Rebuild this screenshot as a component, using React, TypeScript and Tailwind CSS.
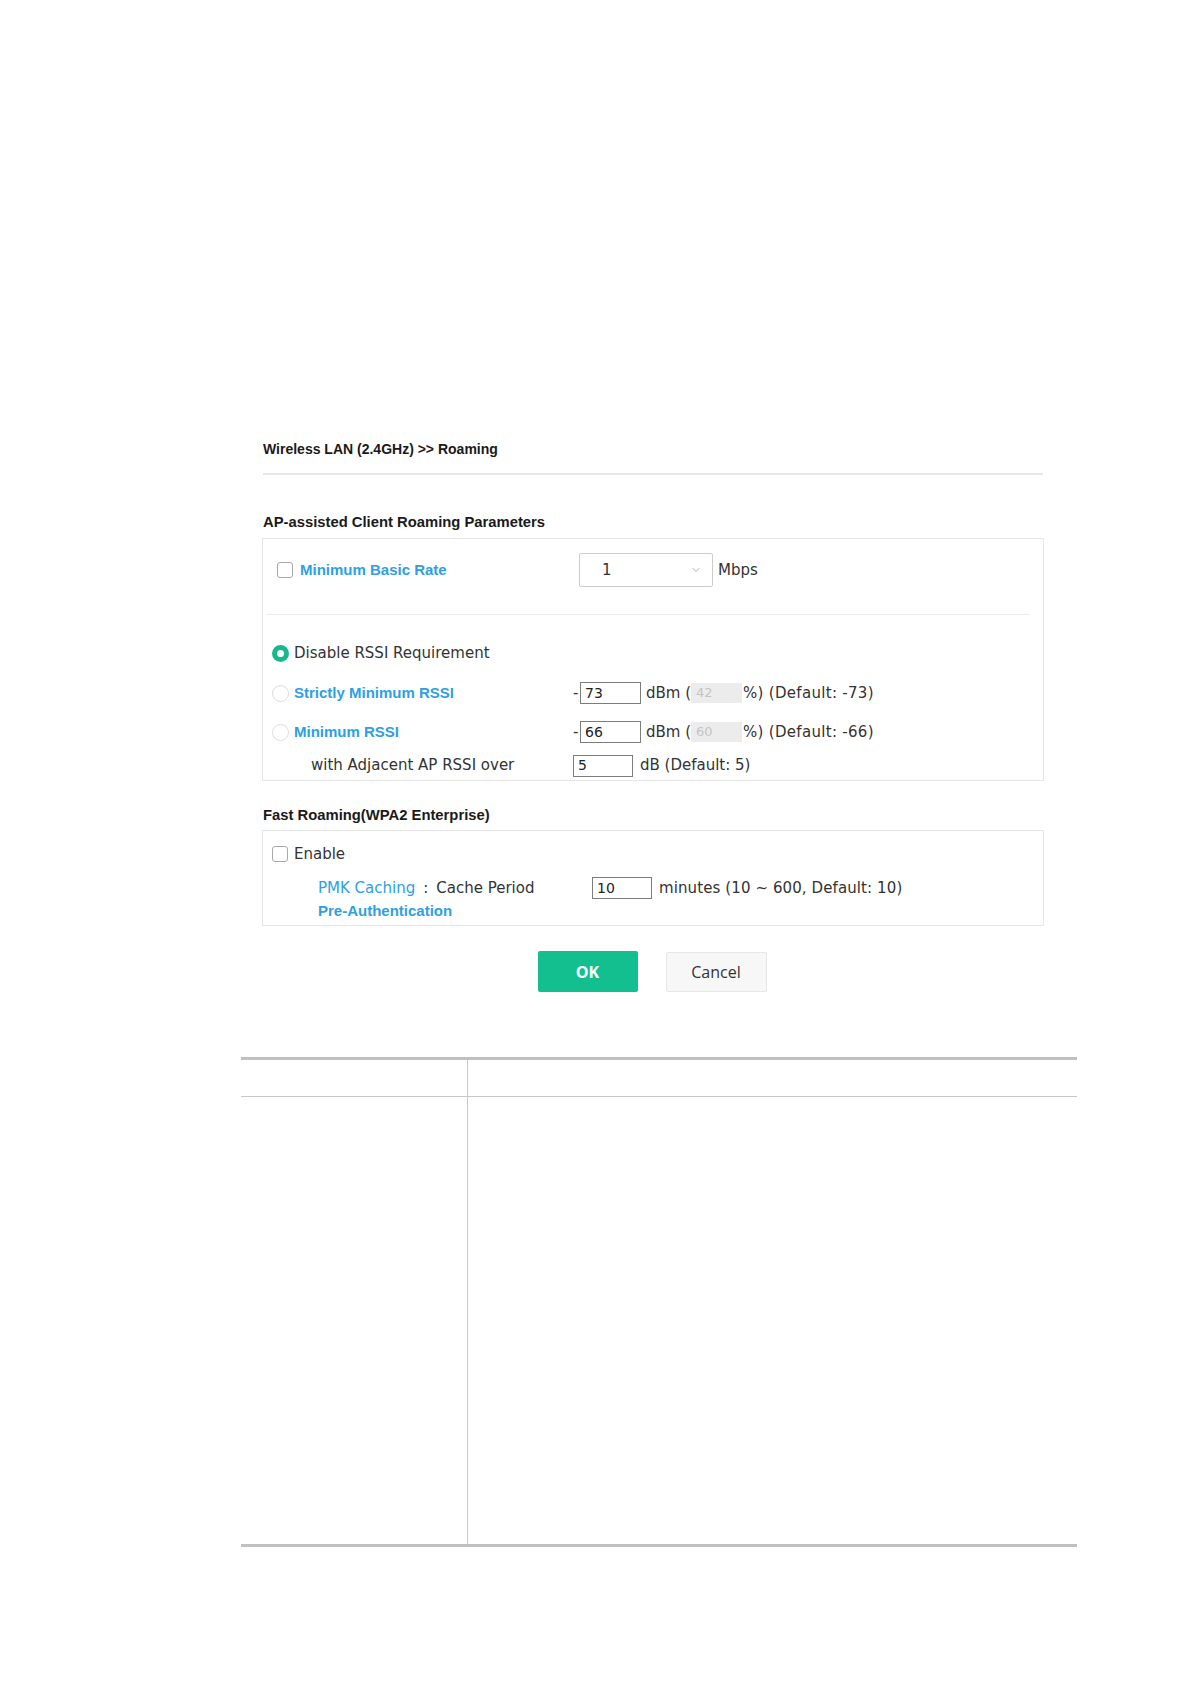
import { ChevronDown } from "lucide-react";

const body = "font-['DejaVu_Sans',sans-serif] text-[15px] text-[#333]";
const link = "font-['Liberation_Sans',Arial,sans-serif] font-bold text-[15px] text-[#2f9fe3]";

function Checkbox() {
  return <span className="block h-[16px] w-[16px] shrink-0 rounded-[3px] border border-[#a8a8a8] bg-white" />;
}

function Radio({ checked = false }: { checked?: boolean }) {
  if (checked) {
    return (
      <span className="flex h-[17px] w-[17px] shrink-0 items-center justify-center rounded-full bg-[#17b98c]">
        <span className="block h-[7px] w-[7px] rounded-full bg-white" />
      </span>
    );
  }
  return <span className="block h-[17px] w-[17px] shrink-0 rounded-full border border-[#dcdcdc] bg-white" />;
}

function TextBox({ value, width }: { value: string; width: string }) {
  return (
    <span
      className={`flex h-[22px] ${width} items-center border border-[#7d7d7d] bg-white pl-[4px] font-['DejaVu_Sans',sans-serif] text-[14px] text-[#222]`}
    >
      {value}
    </span>
  );
}

function PercentBox({ value }: { value: string }) {
  return (
    <span className="flex h-[20px] w-[51px] items-center bg-[#ececec] pl-[5px] font-['DejaVu_Sans',sans-serif] text-[13px] text-[#c4c4c4]">
      {value}
    </span>
  );
}

function RssiRow({ label, value, percent, def }: { label: string; value: string; percent: string; def: string }) {
  return (
    <div className={`flex h-[22px] items-center ${body}`}>
      <div className="flex w-[310px] items-center gap-[5px] pl-[9px]">
        <Radio />
        <span className={link}>{label}</span>
      </div>
      <span className="w-[7px]">-</span>
      <TextBox value={value} width="w-[61px]" />
      <span className="ml-[5px]">dBm (</span>
      <PercentBox value={percent} />
      <span className="ml-[1px] tracking-[0.3px]">%) (Default: {def})</span>
    </div>
  );
}

export default function App() {
  return (
    <div className="min-h-[1684px] w-[1190px] bg-white">
      <div className="ml-[262px] w-[782px] pt-[439px]">
        {/* Title */}
        <h1 className="h-[20px] pl-px font-['Liberation_Sans',Arial,sans-serif] text-[14px] leading-[20px] font-bold text-[#1a1a1a]">
          Wireless LAN (2.4GHz) &gt;&gt; Roaming
        </h1>
        <div className="ml-px mt-[14px] h-[2px] w-[780px] bg-[#e8e8e8]" />

        {/* AP-assisted */}
        <h2 className="mt-[37px] h-[20px] pl-px font-['Liberation_Sans',Arial,sans-serif] text-[14.8px] leading-[20px] font-bold text-[#1a1a1a]">
          AP-assisted Client Roaming Parameters
        </h2>
        <div className="mt-[6px] w-[782px] border border-[#e6e6e6] pb-[4px]">
          <div className="flex items-center pl-[14px] pt-[14px]">
            <div className={`flex w-[302px] items-center gap-[7px] ${body}`}>
              <Checkbox />
              <span className={link}>Minimum Basic Rate</span>
            </div>
            <div className={`flex h-[34px] w-[134px] items-center justify-between rounded-[2px] border border-[#cccccc] pl-[22px] pr-[10px] ${body}`}>
              <span>1</span>
              <ChevronDown className="h-[12px] w-[12px] text-[#9a9a9a]" strokeWidth={1.5} />
            </div>
            <span className={`ml-[5px] ${body}`}>Mbps</span>
          </div>
          <div className="ml-[4px] mr-[14px] mt-[27px] h-px bg-[#ececec]" />

          <div className={`mt-[28px] flex h-[20px] items-center gap-[5px] pl-[9px] ${body}`}>
            <Radio checked />
            <span>Disable RSSI Requirement</span>
          </div>
          <div className="mt-[19px]">
            <RssiRow label="Strictly Minimum RSSI" value="73" percent="42" def="-73" />
          </div>
          <div className="mt-[17px]">
            <RssiRow label="Minimum RSSI" value="66" percent="60" def="-66" />
          </div>
          <div className={`mt-[12px] flex h-[21px] items-center ${body}`}>
            <span className="w-[310px] pl-[48px]">with Adjacent AP RSSI over</span>
            <TextBox value="5" width="w-[60px]" />
            <span className="ml-[7px]">dB (Default: 5)</span>
          </div>
        </div>

        {/* Fast Roaming */}
        <h2 className="mt-[24px] h-[20px] pl-px font-['Liberation_Sans',Arial,sans-serif] text-[14.8px] leading-[20px] font-bold text-[#1a1a1a]">
          Fast Roaming(WPA2 Enterprise)
        </h2>
        <div className="mt-[5px] w-[782px] border border-[#e6e6e6] pb-[4px] pt-[13px]">
          <div className={`flex h-[20px] items-center gap-[6px] pl-[9px] ${body}`}>
            <Checkbox />
            <span>Enable</span>
          </div>
          <div className={`mt-[13px] flex h-[22px] items-center ${body}`}>
            <div className="flex w-[329px] items-center pl-[55px]">
              <span className="text-[#2f9fe3]">PMK Caching</span>
              <span className="ml-[8px] mr-[8px]">:</span>
              <span>Cache Period</span>
            </div>
            <TextBox value="10" width="w-[60px]" />
            <span className="ml-[7px] tracking-[0.1px]">minutes (10 ~ 600, Default: 10)</span>
          </div>
          <div className="mt-[2px] flex h-[20px] items-center pl-[55px]">
            <span className={link}>Pre-Authentication</span>
          </div>
        </div>

        {/* Buttons */}
        <div className="mt-[25px] flex items-start justify-center gap-[28px] pr-[2px]">
          <button className="h-[41px] w-[100px] rounded-[2px] bg-[#14bf8f] font-['Open_Sans',sans-serif] text-[16px] font-bold text-white">
            OK
          </button>
          <button className="mt-px h-[40px] w-[101px] rounded-[2px] border border-[#e6e6e6] bg-[#f7f7f7] font-['Open_Sans',sans-serif] text-[16px] text-[#333]">
            Cancel
          </button>
        </div>
      </div>

      {/* Table */}
      <div className="ml-[241px] mt-[65px] w-[836px] border-b-[3px] border-t-[3px] border-[#c0c0c0]">
        <div className="flex h-[37px] border-b border-[#c8c8c8]">
          <div className="w-[227px] border-r border-[#c8c8c8]" />
          <div className="flex-1" />
        </div>
        <div className="flex h-[447px]">
          <div className="w-[227px] border-r border-[#c8c8c8]" />
          <div className="flex-1" />
        </div>
      </div>
    </div>
  );
}
